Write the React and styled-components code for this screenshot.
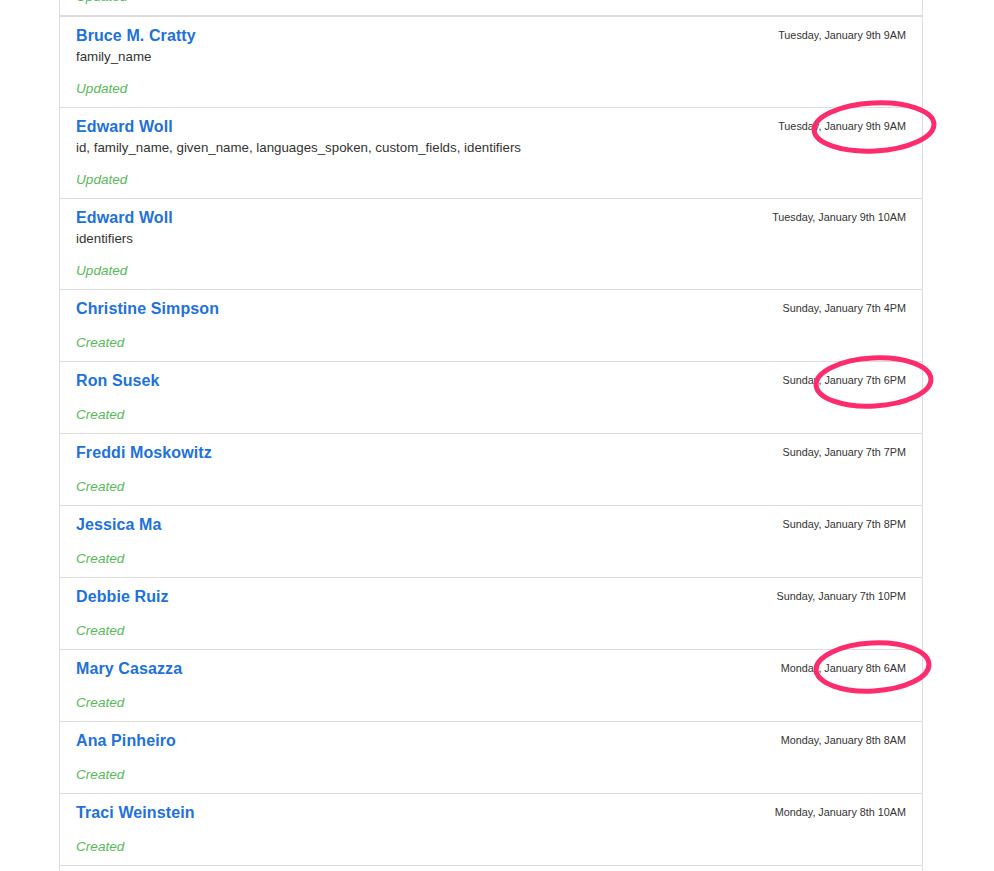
import React from "react";
import styled, { createGlobalStyle } from "styled-components";

const GlobalStyle = createGlobalStyle`
  html, body {
    margin: 0;
    padding: 0;
    background: #fff;
    overflow: hidden;
  }
  body {
    font-family: "Liberation Sans", Arial, sans-serif;
    color: #333;
  }
`;

const events = [
  { name: "Edward Woll", fields: "identifiers", status: "Updated", date: "Tuesday, January 9th 8AM" },
  { name: "Bruce M. Cratty", fields: "family_name", status: "Updated", date: "Tuesday, January 9th 9AM" },
  {
    name: "Edward Woll",
    fields: "id, family_name, given_name, languages_spoken, custom_fields, identifiers",
    status: "Updated",
    date: "Tuesday, January 9th 9AM",
    mark: { top: -8, right: -15, w: 126 },
  },
  { name: "Edward Woll", fields: "identifiers", status: "Updated", date: "Tuesday, January 9th 10AM" },
  { name: "Christine Simpson", status: "Created", date: "Sunday, January 7th 4PM" },
  { name: "Ron Susek", status: "Created", date: "Sunday, January 7th 6PM", mark: { top: -7, right: -12, w: 121 } },
  { name: "Freddi Moskowitz", status: "Created", date: "Sunday, January 7th 7PM" },
  { name: "Jessica Ma", status: "Created", date: "Sunday, January 7th 8PM" },
  { name: "Debbie Ruiz", status: "Created", date: "Sunday, January 7th 10PM" },
  { name: "Mary Casazza", status: "Created", date: "Monday, January 8th 6AM", mark: { top: -10, right: -10, w: 119 } },
  { name: "Ana Pinheiro", status: "Created", date: "Monday, January 8th 8AM" },
  { name: "Traci Weinstein", status: "Created", date: "Monday, January 8th 10AM" },
  { name: "Jeff Collins", status: "Created", date: "Monday, January 8th 11AM" },
];

const Page = styled.div`
  height: 871px;
  overflow: hidden;
`;

const List = styled.ul`
  list-style: none;
  margin: -75px 0 0 59px;
  padding: 0;
  width: 864px;
  box-sizing: border-box;
  border-left: 1px solid #ddd;
  border-right: 1px solid #ddd;
`;

const Item = styled.li`
  position: relative;
  display: flex;
  justify-content: space-between;
  align-items: flex-start;
  padding: 10px 16px 9px;
  border-bottom: ${(p) => (p.$thick ? "2px" : "1px")} solid #ddd;
`;

const Body = styled.div`
  display: flex;
  flex-direction: column;
`;

const Name = styled.a`
  font-size: 16px;
  line-height: 18px;
  font-weight: 700;
  color: #2271d8;
  text-decoration: none;
  margin-bottom: 2px;
  letter-spacing: 0.1px;
`;

const Fields = styled.div`
  font-size: 13.3px;
  line-height: 19px;
  color: #333;
`;

const Status = styled.div`
  margin-top: 14px;
  font-size: 13.6px;
  line-height: 18px;
  font-style: italic;
  color: #5cb85c;
`;

const Stamp = styled.div`
  font-size: 10.8px;
  line-height: 16px;
  color: #333;
  white-space: nowrap;
`;

const Mark = styled.svg`
  position: absolute;
  top: ${(p) => p.$top}px;
  right: ${(p) => p.$right}px;
  width: ${(p) => p.$w}px;
  height: 54px;
  transform: rotate(-3deg);
  pointer-events: none;
  overflow: visible;
`;

const Circle = ({ top, right, w }) => (
  <Mark $top={top} $right={right} $w={w} viewBox={`0 0 ${w} 54`}>
    <ellipse cx={w / 2} cy="27" rx={w / 2 - 3} ry="24" fill="none" stroke="#fe2c6d" strokeWidth="5" />
  </Mark>
);

export default function App() {
  return (
    <Page>
      <GlobalStyle />
      <List>
        {events.map((e, i) => (
          <Item key={i} $thick={i === 0}>
            <Body>
              <Name href="#">{e.name}</Name>
              {e.fields && <Fields>{e.fields}</Fields>}
              <Status>{e.status}</Status>
            </Body>
            <Stamp>{e.date}</Stamp>
            {e.mark && <Circle {...e.mark} />}
          </Item>
        ))}
      </List>
    </Page>
  );
}
